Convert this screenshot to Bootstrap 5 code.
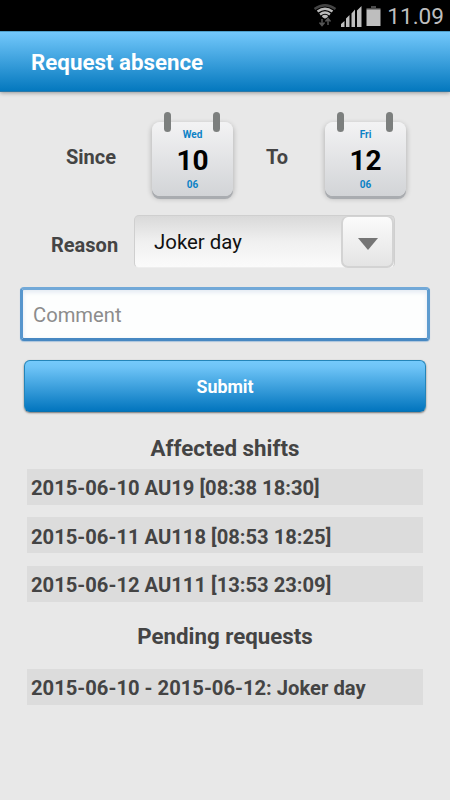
<!DOCTYPE html>
<html lang="en">
<head>
<meta charset="utf-8">
<meta name="viewport" content="width=device-width, initial-scale=1">
<title>Request absence</title>
<link href="https://cdn.jsdelivr.net/npm/bootstrap@5.3.0/dist/css/bootstrap.min.css" rel="stylesheet">
<style>
body{font-family:Roboto,"Liberation Sans",sans-serif;background:#e8e8e8;color:#444;width:450px;height:800px;overflow:hidden;line-height:1}
.status-bar{height:31px;background:#000;color:#bebebe;font-size:22.6px;padding-right:6px}
.status-icons{margin-right:1px}
.clock{padding-top:3px}
.app-bar{height:61px;background:linear-gradient(#73c8fb,#0478be);border-top:1px solid #4e9fca;border-bottom:1px solid #2a78a8;box-shadow:0 1px 4px rgba(0,0,0,.35);padding:1px 0 0 31px}
.app-title{font-size:22.3px;font-weight:700;color:#fff}
.dates{height:88px;margin-top:19px}
.lbl{font-size:20px;font-weight:700;line-height:24px}
.lbl-since{width:86px;margin-left:66px;padding-top:34px}
.lbl-to{width:92px;padding:34px 0 0 33px}
.cal{width:81px;height:74px;margin-top:11px;border-radius:8px;background:linear-gradient(#f3f3f4,#d2d4d7);box-shadow:0 3px 0 #a9acb0,0 2px 5px 1px rgba(0,0,0,.2);color:#0b82c6;padding-top:7px}
.ring{width:7px;height:20px;border-radius:4px;background:#7c7f7e;top:-10px}
.ring-l{left:12px}
.ring-r{left:61px}
.cal-small{font-size:10px;font-weight:700;height:12px;line-height:12px}
.cal-num{font-size:28px;font-weight:700;color:#000;line-height:32px;margin:4px 0 2px}
.reason{margin:16px 0 0 51px;height:53px}
.lbl-reason{width:83px;padding-top:18px}
.pick{width:261px;height:53px;border-radius:5px;background:linear-gradient(#d9d9d9,#f0f0f0 50%,#fbfbfb);border:1px solid #cfcfcf;border-bottom-color:#eee;color:#111;font-size:20.4px;padding-left:19px}
.pick span{padding-top:2px}
.pick-btn{width:53px;height:52px;border-radius:7px;border:2px solid #d3d3d3;border-top-width:1px;background:linear-gradient(#fbfbfb,#e4e4e4)}
.pick-btn svg{margin-top:5px}
.comment{width:410px;height:54px;margin:19px 0 0 20px;padding:2px 10px 0;border:3px solid;border-color:#72a9d8 #5e9ccf #4788c2 #5796cd;border-radius:4px;background:#fdfefe;font-size:20.2px;box-shadow:inset 0 2px 5px #e0e8f2,0 1px 1px #aac4dc;outline:0}
.comment::placeholder{color:#8c8c8c;opacity:1}
.submit{width:402px;height:52px;margin:19px 0 0 24px;border-radius:6px;border:1px solid #2485b9;border-bottom-color:#0871b0;background:linear-gradient(#75cafc,#6ec4f7 12%,#0275be);box-shadow:0 1px 2px rgba(0,0,0,.5);font-size:17.8px;font-weight:700;color:#fff;padding:3px 0 0}
.sect{font-size:22.3px;font-weight:700;line-height:26px}
.sect-a{margin:23px 0 8px}
.sect-p{margin:21px 0 20px}
.shifts{margin:0 27px;gap:12.400px}
.shift{height:36px;background:#dcdcdc;font-size:20.2px;font-weight:700;padding:3px 0 0 4px}
</style>
<script src="https://cdn.jsdelivr.net/npm/bootstrap@5.3.0/dist/js/bootstrap.bundle.min.js"></script>
</head>
<body>
<div class="status-bar d-flex align-items-center justify-content-end">
<svg class="status-icons" width="74" height="31" viewBox="0 0 74 31">
<g fill="none" stroke-width="2.3">
<path d="M2.500 9Q13 1.500 23.500 9" stroke="#444"/><path d="M5.500 11.500Q13 6 20.500 11.500" stroke="#bbb"/><path d="M8 14.500Q13 10.500 18 14.500" stroke="#bbb"/><path d="M10.500 17Q13 15 15.500 17" stroke="#bbb"/></g>
<path d="M10.500 16h5L13 19z" fill="#bbb"/>
<path d="M10 19v6M7.500 22.500l2.500 3 2.500-3M16 25v-6M13.500 21.500l2.500-3 2.500 3" stroke="#555" stroke-width="1.500" fill="none"/>
<path d="M29 27v-3l3.500-3v6zM34 27v-8.500l3.500-3.500v12zM39.500 27V13.500l3.500-4V27zM45 27V10.500L49.500 6v21z" fill="#bebebe"/>
<path d="M59 6h5v2h4.500v2H54.500V8H59z" fill="#4a4a4a"/><path d="M54.500 9.500h14V26h-14z" fill="#bebebe"/>
</svg>
<span class="clock">11.09</span>
</div>
<header class="app-bar d-flex align-items-center"><span class="app-title">Request absence</span></header>
<main>
<div class="dates d-flex">
<div class="lbl lbl-since">Since</div>
<div class="cal position-relative text-center"><i class="ring ring-l position-absolute"></i><i class="ring ring-r position-absolute"></i>
<div class="cal-small">Wed</div><div class="cal-num">10</div><div class="cal-small">06</div></div>
<div class="lbl lbl-to">To</div>
<div class="cal position-relative text-center"><i class="ring ring-l position-absolute"></i><i class="ring ring-r position-absolute"></i>
<div class="cal-small">Fri</div><div class="cal-num">12</div><div class="cal-small">06</div></div>
</div>
<div class="reason d-flex">
<div class="lbl lbl-reason">Reason</div>
<div class="pick d-flex align-items-center justify-content-between"><span>Joker day</span>
<div class="pick-btn d-flex align-items-center justify-content-center"><svg width="20" height="12" viewBox="0 0 20 12"><path d="M0 0h20L10 12z" fill="#757575"/></svg></div></div>
</div>
<input class="comment d-block" type="text" placeholder="Comment" aria-label="Comment">
<button class="btn submit d-block" type="button">Submit</button>
<h2 class="sect sect-a text-center">Affected shifts</h2>
<div class="shifts d-flex flex-column">
<div class="shift d-flex align-items-center">2015-06-10 AU19 [08:38 18:30]</div>
<div class="shift d-flex align-items-center">2015-06-11 AU118 [08:53 18:25]</div>
<div class="shift d-flex align-items-center">2015-06-12 AU111 [13:53 23:09]</div>
</div>
<h2 class="sect sect-p text-center">Pending requests</h2>
<div class="shifts"><div class="shift d-flex align-items-center">2015-06-10 - 2015-06-12: Joker day</div></div>
</main>
</body>
</html>
